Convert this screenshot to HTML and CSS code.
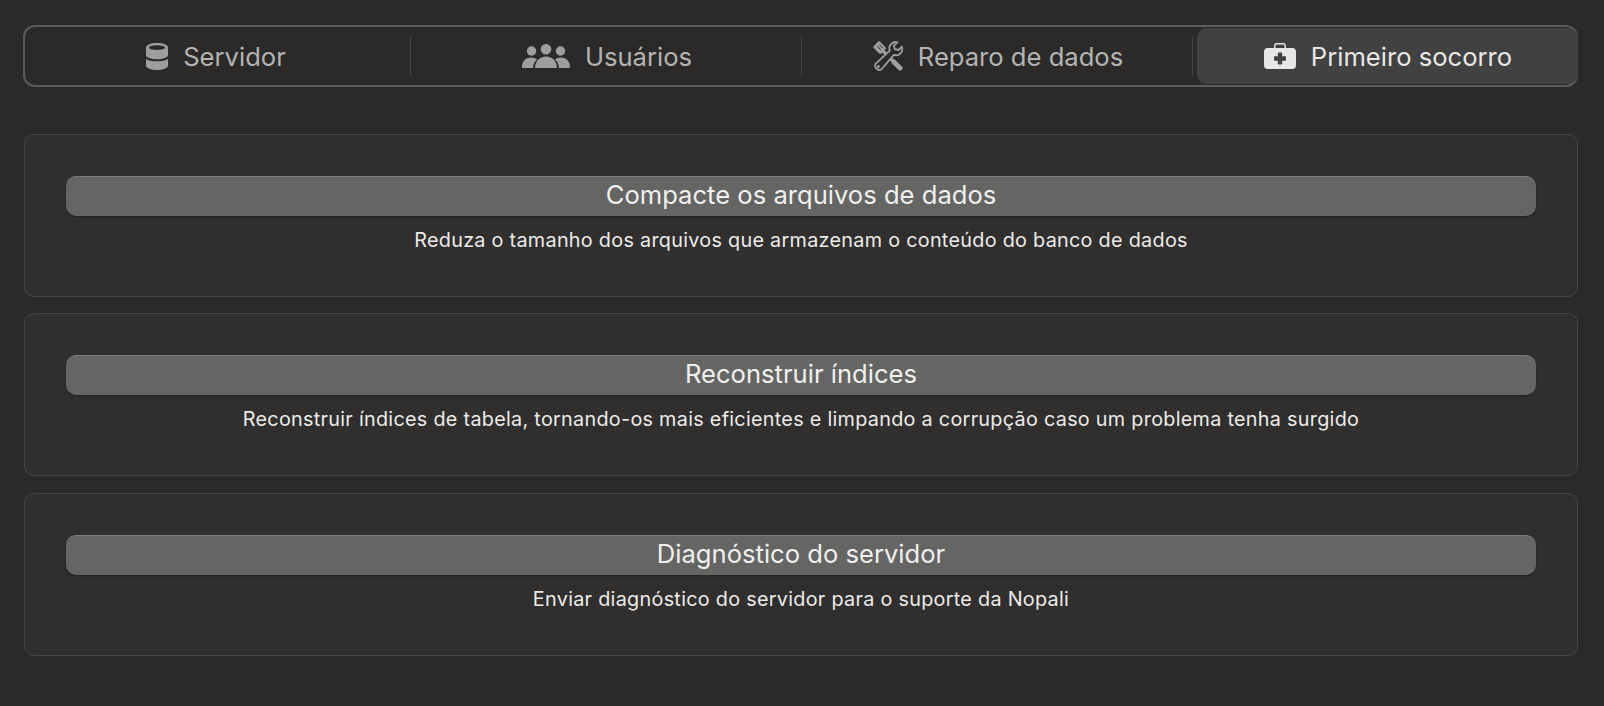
FILE: index.html
```html
<!DOCTYPE html>
<html lang="pt">
<head>
<meta charset="utf-8">
<title>Primeiro socorro</title>
<link rel="stylesheet" href="styles.css">
</head>
<body>
<nav class="tabs">
  <div class="tab sep first">
    <svg class="ico ico-db" viewBox="0 0 22 27"><path fill-rule="evenodd" d="M11 0C5 0 0 1.800 0 4.500V12C0 14.500 4.500 16.300 11 16.300S22 14.500 22 12V4.500C22 1.800 17 0 11 0ZM11 2.200C15.800 2.200 19 3.300 19 4.500S15.800 6.900 11 6.900 3 5.700 3 4.500 6.200 2.200 11 2.200Z"/><path d="M0 15.700C2 17.500 6 18.300 11 18.300S20 17.500 22 15.700V22.500C22 25.200 17 27 11 27S0 25.200 0 22.500Z"/></svg>
    <span>Servidor</span>
  </div>
  <div class="tab sep">
    <svg class="ico ico-users" viewBox="0 0 48 24"><circle cx="9.500" cy="7" r="4.700"/><circle cx="24" cy="5.300" r="5.300"/><circle cx="38.500" cy="7" r="4.700"/><path d="M0 23C0 17.500 3.500 13.500 9 13.500 11.500 13.500 13.500 14.300 15 15.500 12.700 17.300 11.200 20 11 24H1C.4 24 0 23.600 0 23ZM48 23C48 17.500 44.500 13.500 39 13.500 36.500 13.500 34.500 14.300 33 15.500 35.300 17.300 36.800 20 37 24H47C47.600 24 48 23.600 48 23ZM13 24C13 17.500 17.500 12.500 24 12.500S35 17.500 35 24Z"/></svg>
    <span>Usuários</span>
  </div>
  <div class="tab sep">
    <svg class="ico ico-tools" viewBox="0 0 30 30">
      <path class="t-solid" d="M.8 5 5 .8C5.600 .2 6.500 .2 7.100 .8L12.500 6.200C13.100 6.800 13.100 7.700 12.500 8.300L11.500 9.300 21 18.500 22.200 18.700 29 25.500C29.900 26.400 29.900 27.700 29 28.500L28.500 29C27.700 29.900 26.400 29.900 25.500 29L18.700 22.200 18.500 21 9.300 11.500 8.300 12.500C7.700 13.100 6.800 13.100 6.200 12.500L.8 7.100C.2 6.500 .2 5.600 .8 5Z"/>
      <path class="t-line" d="M4.500 5.500 8 9M6.500 3.800 10 7.300"/>
      <path class="t-wrench" d="M24.500 1.300A6.300 6.300 0 0 0 16.800 9.600L2.500 22.800A4.300 4.300 0 0 0 8.300 28.500L20.900 13.900A6.300 6.300 0 0 0 28.900 5.700L25.600 9 21.800 8.100 20.900 4.600Z"/>
      <circle class="t-solid" cx="5.300" cy="25.500" r="1.500"/>
    </svg>
    <span>Reparo de dados</span>
  </div>
  <div class="tab active">
    <svg class="ico ico-kit" viewBox="0 0 32 26"><path fill-rule="evenodd" d="M10 5V3C10 1.300 11.300 0 13 0H19C20.700 0 22 1.300 22 3V5H28.500C30.500 5 32 6.500 32 8.500V22.500C32 24.500 30.500 26 28.500 26H3.500C1.500 26 0 24.500 0 22.500V8.500C0 6.500 1.500 5 3.500 5ZM11.500 5H20.500V3.200C20.500 2.100 19.900 1.500 18.800 1.500H13.200C12.100 1.500 11.500 2.100 11.500 3.200ZM13.800 10.500V13.300H11C10.400 13.300 10 13.700 10 14.300V16.700C10 17.300 10.400 17.700 11 17.700H13.800V20.500C13.800 21.100 14.200 21.500 14.800 21.500H17.200C17.800 21.500 18.200 21.100 18.200 20.500V17.700H21C21.600 17.700 22 17.300 22 16.700V14.300C22 13.700 21.600 13.300 21 13.300H18.200V10.500C18.200 9.900 17.800 9.500 17.200 9.500H14.800C14.200 9.500 13.800 9.900 13.800 10.500Z"/></svg>
    <span>Primeiro socorro</span>
  </div>
</nav>
<main class="cards">
  <section class="card">
    <button class="action">Compacte os arquivos de dados</button>
    <p class="desc">Reduza o tamanho dos arquivos que armazenam o conteúdo do banco de dados</p>
  </section>
  <section class="card">
    <button class="action">Reconstruir índices</button>
    <p class="desc">Reconstruir índices de tabela, tornando-os mais eficientes e limpando a corrupção caso um problema tenha surgido</p>
  </section>
  <section class="card">
    <button class="action">Diagnóstico do servidor</button>
    <p class="desc">Enviar diagnóstico do servidor para o suporte da Nopali</p>
  </section>
</main>
</body>
</html>
```
FILE: styles.css
```css
* { box-sizing: border-box; }
html, body { margin: 0; height: 100%; }
body {
  background: #2b2a29;
  font-family: Inter, "Liberation Sans", sans-serif;
  padding: 25px 26px 0 24px;
  overflow: hidden;
}
.tabs {
  display: grid;
  grid-template-columns: 386px 391px 391px 1fr;
  height: 62px;
  margin-left: -1px;
  border: 2px solid #5c5c5b;
  border-radius: 12px;
}
.tab {
  display: flex;
  align-items: center;
  justify-content: center;
  gap: 15px;
  padding-left: 1px;
  font-size: 25.6px;
  color: #b4b4b3;
  fill: #9e9e9d;
  position: relative;
  min-width: 0;
}
.tab.first { padding-right: 5px; }
.tab.sep::after {
  content: "";
  position: absolute;
  right: 0;
  top: 9px;
  height: 40px;
  width: 1.5px;
  background: #434342;
}
.tab.active {
  margin: 1px -2px 1px 4px;
  border-radius: 10px;
  background: #414141;
  color: #e8e8e7;
  fill: #e6e6e5;
}
.ico { display: block; flex: none; }
.ico-db { width: 22px; height: 27px; }
.ico-users { width: 48px; height: 24px; }
.ico-tools { width: 30px; height: 30px; }
.ico-kit { width: 32px; height: 26px; }
.t-solid { fill: #9e9e9d; }
.t-line { fill: none; stroke: #2b2a29; stroke-width: 1; }
.t-wrench { fill: #2b2a29; stroke: #9e9e9d; stroke-width: 1.8; stroke-linejoin: round; }
.cards {
  display: flex;
  flex-direction: column;
  gap: 16.4px;
  margin-top: 47px;
}
.card {
  height: 163px;
  padding: 41px 41px 0;
  background: #302f2e;
  border: 1.5px solid #454544;
  border-radius: 10px;
  display: flex;
  flex-direction: column;
  align-items: stretch;
}
.action {
  height: 40px;
  padding: 0 0 3px;
  border: 0;
  border-top: 1px solid #7d7d7b;
  border-radius: 10px;
  background: #656563;
  box-shadow: 0 1px 2px rgba(0, 0, 0, .35);
  color: #f0f0ef;
  font: inherit;
  font-size: 25.6px;
  line-height: 34px;
}
.desc {
  margin: 11px 0 0;
  text-align: center;
  color: #ecebea;
  font-size: 19.8px;
  letter-spacing: .29px;
  line-height: 26px;
}
```
